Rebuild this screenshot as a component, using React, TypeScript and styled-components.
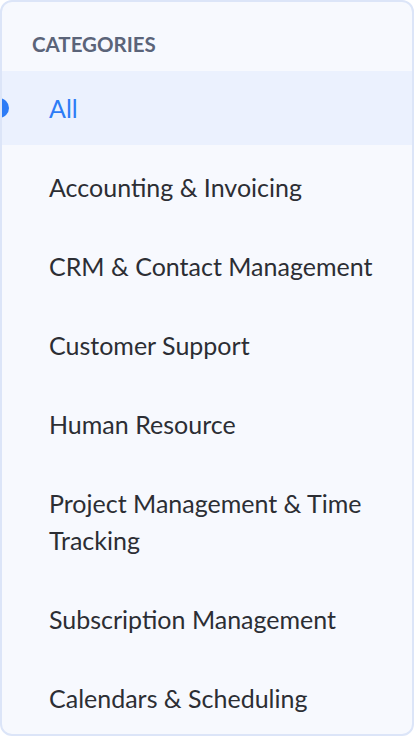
import React, { useState } from 'react';
import styled, { createGlobalStyle } from 'styled-components';

const GlobalStyle = createGlobalStyle`
  html, body {
    margin: 0;
    padding: 0;
    background: #ffffff;
  }
  body {
    font-family: Lato, 'Open Sans', sans-serif;
  }
`;

const Card = styled.aside`
  box-sizing: border-box;
  width: 414px;
  height: 736px;
  border: 2px solid #dce5f8;
  border-radius: 12px;
  background-color: #f7f9fe;
  padding-top: 30px;
  overflow: hidden;
`;

const Heading = styled.h3`
  margin: 0 0 15px;
  padding-left: 30px;
  font-size: 20.5px;
  line-height: 24px;
  font-weight: 700;
  color: #5b6479;
  text-transform: uppercase;
`;

const List = styled.ul`
  list-style: none;
  margin: 0;
  padding: 0;
  display: flex;
  flex-direction: column;
  gap: 5px;
`;

const Item = styled.li<{ active?: boolean }>`
  position: relative;
  padding: 18.5px 30px 18.5px 47px;
  font-size: 25px;
  line-height: 37px;
  color: ${props => (props.active ? '#2d7cf6' : '#2c2e34')};
  background-color: ${props => (props.active ? '#ebf1fe' : 'transparent')};
  cursor: pointer;
`;

const Marker = styled.span`
  position: absolute;
  left: -13px;
  top: 50%;
  width: 20px;
  height: 20px;
  margin-top: -10px;
  border-radius: 50%;
  background-color: #2d7cf6;
`;

const categories = [
  'All',
  'Accounting & Invoicing',
  'CRM & Contact Management',
  'Customer Support',
  'Human Resource',
  'Project Management & Time Tracking',
  'Subscription Management',
  'Calendars & Scheduling',
];

const App: React.FC = () => {
  const [selected, setSelected] = useState('All');

  return (
    <>
      <GlobalStyle />
      <Card>
        <Heading>Categories</Heading>
        <List>
          {categories.map(name => (
            <Item key={name} active={name === selected} onClick={() => setSelected(name)}>
              {name === selected && <Marker />}
              {name}
            </Item>
          ))}
        </List>
      </Card>
    </>
  );
};

export default App;
